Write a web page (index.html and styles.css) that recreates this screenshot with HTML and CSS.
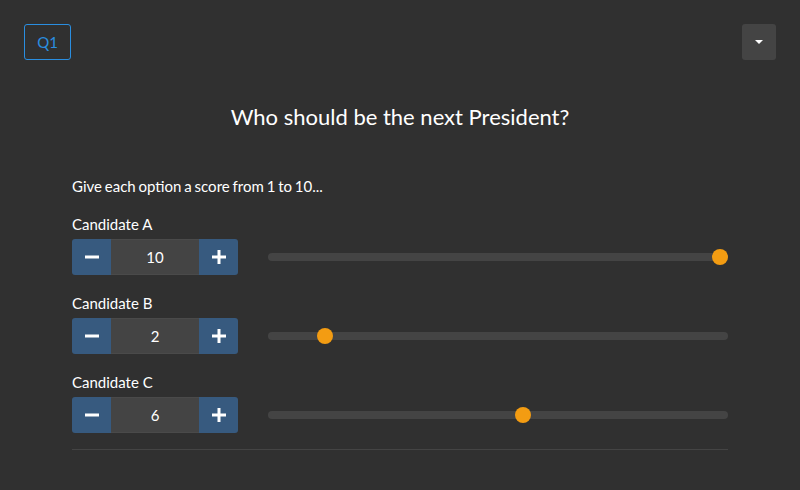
FILE: index.html
```html
<!DOCTYPE html>
<html>
<head>
<meta charset="utf-8">
<link rel="stylesheet" href="styles.css">
</head>
<body>
<header class="topbar">
  <button class="qbtn">Q1</button>
  <button class="menubtn"><span class="caret"></span></button>
</header>
<main class="content">
  <h1 class="title">Who should be the next President?</h1>
  <p class="intro">Give each option a score from 1 to 10...</p>
  <div class="option">
    <div class="label">Candidate A</div>
    <div class="row">
      <div class="stepper">
        <button class="step"><svg width="14" height="14" viewBox="0 0 14 14"><rect x="0" y="5.5" width="14" height="3" fill="#fff"/></svg></button>
        <div class="value">10</div>
        <button class="step"><svg width="14" height="14" viewBox="0 0 14 14"><rect x="0" y="5.5" width="14" height="3" fill="#fff"/><rect x="5.5" y="0" width="3" height="14" fill="#fff"/></svg></button>
      </div>
      <div class="slider"><div class="track"><span class="thumb" style="--p: 1"></span></div></div>
    </div>
  </div>
  <div class="option">
    <div class="label">Candidate B</div>
    <div class="row">
      <div class="stepper">
        <button class="step"><svg width="14" height="14" viewBox="0 0 14 14"><rect x="0" y="5.5" width="14" height="3" fill="#fff"/></svg></button>
        <div class="value">2</div>
        <button class="step"><svg width="14" height="14" viewBox="0 0 14 14"><rect x="0" y="5.5" width="14" height="3" fill="#fff"/><rect x="5.5" y="0" width="3" height="14" fill="#fff"/></svg></button>
      </div>
      <div class="slider"><div class="track"><span class="thumb" style="--p: 0.1111"></span></div></div>
    </div>
  </div>
  <div class="option">
    <div class="label">Candidate C</div>
    <div class="row">
      <div class="stepper">
        <button class="step"><svg width="14" height="14" viewBox="0 0 14 14"><rect x="0" y="5.5" width="14" height="3" fill="#fff"/></svg></button>
        <div class="value">6</div>
        <button class="step"><svg width="14" height="14" viewBox="0 0 14 14"><rect x="0" y="5.5" width="14" height="3" fill="#fff"/><rect x="5.5" y="0" width="3" height="14" fill="#fff"/></svg></button>
      </div>
      <div class="slider"><div class="track"><span class="thumb" style="--p: 0.5556"></span></div></div>
    </div>
  </div>
  <hr class="rule">
</main>
</body>
</html>
```
FILE: styles.css
```css
* { box-sizing: border-box; }
html, body { margin: 0; padding: 0; }
body {
  background: #303030;
  color: #fff;
  font-family: Lato, "Noto Sans", sans-serif;
  width: 800px;
  height: 490px;
  overflow: hidden;
}
.topbar {
  display: flex;
  justify-content: space-between;
  align-items: flex-start;
  padding: 24px 24px 0 24px;
}
.qbtn {
  width: 47px;
  height: 36px;
  background: transparent;
  border: 1px solid #2a8ee0;
  border-radius: 3px;
  color: #2a8ee0;
  font-family: Lato, sans-serif;
  font-size: 15px;
  padding: 0;
}
.menubtn {
  width: 34px;
  height: 36px;
  background: #444;
  border: none;
  border-radius: 3px;
  display: flex;
  align-items: center;
  justify-content: center;
  padding: 0;
}
.caret {
  width: 0;
  height: 0;
  border-left: 4px solid transparent;
  border-right: 4px solid transparent;
  border-top: 4px solid #fff;
}
.content {
  padding: 0 72px;
}
.title {
  margin: 43px 0 0 0;
  text-align: center;
  font-size: 22px;
  font-weight: 400;
  line-height: 27px;
}
.intro {
  margin: 47px 0 0 0;
  font-size: 15px;
  line-height: 18px;
  word-spacing: -1px;
}
.option { margin-top: 20px; }
.option + .option { margin-top: 19px; }
.label {
  font-size: 15px;
  line-height: 18px;
  margin-bottom: 6px;
}
.row {
  display: flex;
  align-items: center;
}
.stepper {
  display: flex;
  width: 166px;
  height: 36px;
  border-radius: 3px;
  overflow: hidden;
  flex: none;
}
.step {
  width: 39px;
  height: 36px;
  background: #375a7f;
  border: none;
  padding: 0;
  display: flex;
  align-items: center;
  justify-content: center;
}
.step svg { display: block; }
.value {
  flex: 1;
  background: #444;
  border-top: 1px solid #4a4a4a;
  border-bottom: 1px solid #4a4a4a;
  display: flex;
  align-items: center;
  justify-content: center;
  font-size: 15px;
  color: #fff;
}
.slider {
  flex: 1;
  margin-left: 30px;
  height: 16px;
  display: flex;
  align-items: center;
}
.track {
  position: relative;
  width: 100%;
  height: 8px;
  border-radius: 4px;
  background: #444;
}
.thumb {
  position: absolute;
  top: 50%;
  left: calc(8px + (100% - 16px) * var(--p));
  width: 16px;
  height: 16px;
  border-radius: 50%;
  background: #f39c12;
  transform: translate(-50%, -50%);
}
.rule {
  margin: 16px 0 0 0;
  border: none;
  border-top: 1px solid #444;
}
```
